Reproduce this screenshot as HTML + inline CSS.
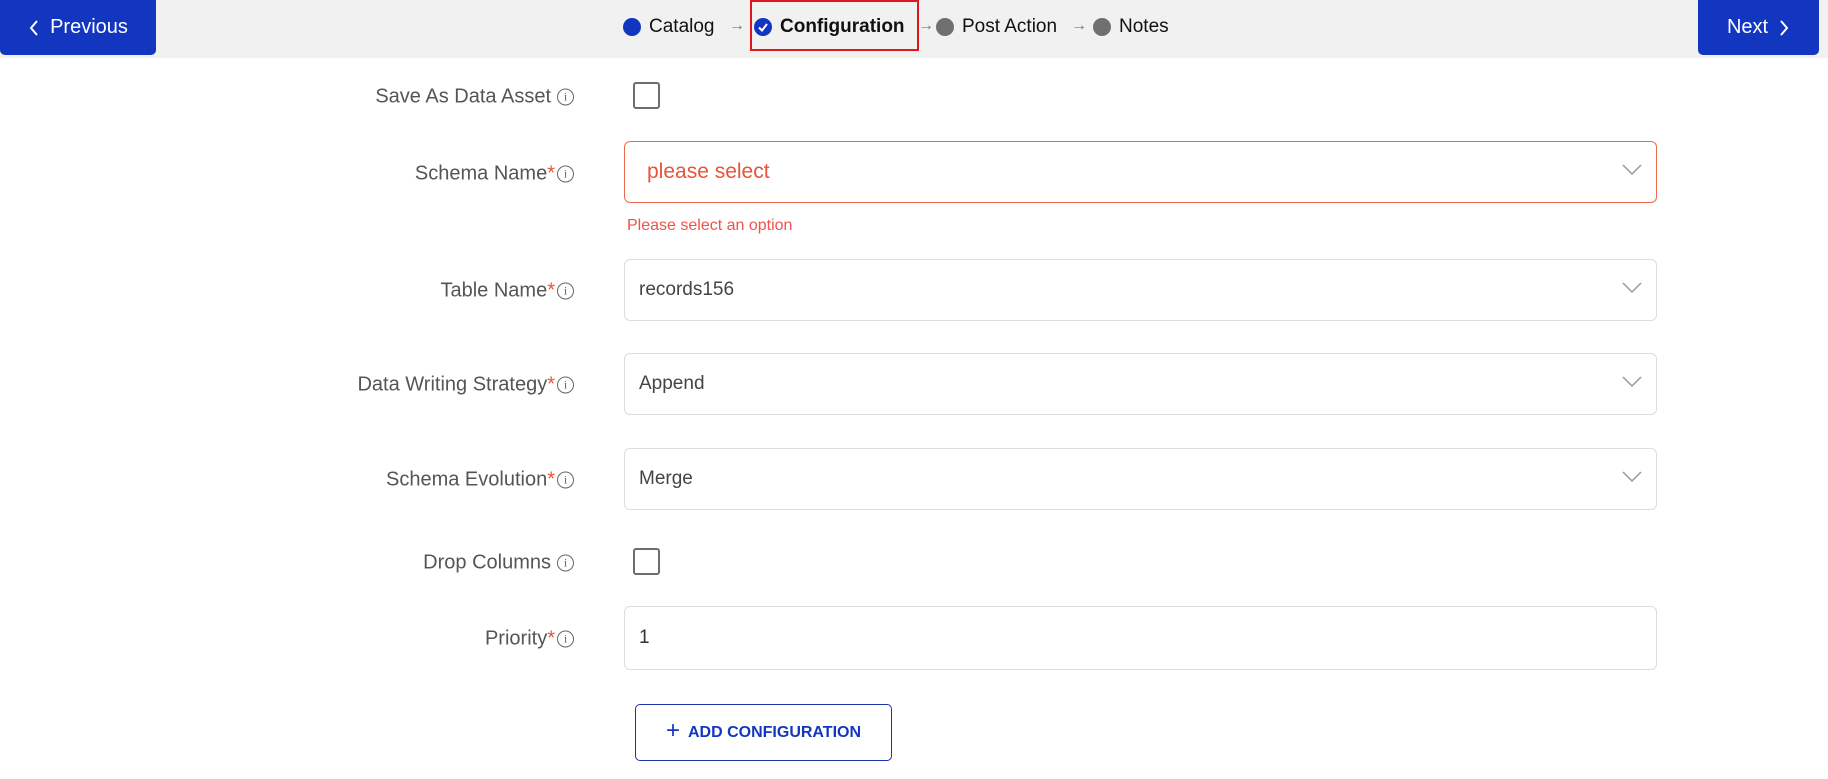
<!DOCTYPE html>
<html><head><meta charset="utf-8"><style>
body{margin:0;width:1828px;height:779px;background:#fff;font-family:"Liberation Sans",sans-serif;position:relative;overflow:hidden}
.hdr{position:absolute;left:0;top:0;width:1828px;height:58px;background:#f1f1f1}
.btn{position:absolute;top:0;height:55px;background:#1336c0;color:#fff;font-size:20px;border-radius:0 0 5px 5px;display:flex;align-items:center;justify-content:center;gap:10px}
.step{position:absolute;top:16px;font-size:19px;color:#111;display:flex;align-items:center}
.dot{width:18px;height:18px;border-radius:50%;display:inline-block;margin-right:8px}
.arr{color:#777;font-size:16px;position:absolute;top:17px}
.lbl{position:absolute;right:1277px;font-size:20px;color:#555;white-space:nowrap;transform:translateY(-50%)}
.lbl.r{right:1273px}
.lbl .s{color:#e8533a}
.info{position:absolute;left:557px;width:17px;height:17px;border:1.5px solid #666;border-radius:50%;transform:translateY(-50%);font-size:12px;color:#666;text-align:center;font-family:"Liberation Serif",serif;box-sizing:border-box;line-height:14px}
.sel{position:absolute;left:624px;width:1033px;height:62px;border:1px solid #ddd;border-radius:6px;box-sizing:border-box;font-size:19px;color:#444;padding-left:14px;display:flex;align-items:center}
.chev{position:absolute;right:14px;top:22px}
.cb{position:absolute;left:633px;width:27px;height:27px;border:2.5px solid #6d6d6d;border-radius:3px;box-sizing:border-box}
</style></head><body>
<div class="hdr"></div>
<div class="btn" style="left:0;width:156px"><svg width="12" height="18"><path d="M9 2 L3 9 L9 16" stroke="#fff" stroke-width="2" fill="none"/></svg>Previous</div>
<div class="btn" style="left:1698px;width:121px">Next<svg width="12" height="18"><path d="M3 2 L9 9 L3 16" stroke="#fff" stroke-width="2" fill="none"/></svg></div>
<div class="step" style="left:623px"><span class="dot" style="background:#1336c0"></span>Catalog</div>
<span class="arr" style="left:729px">→</span>
<div style="position:absolute;left:750px;top:0;width:169px;height:51px;border:2px solid #e0161e;box-sizing:border-box"></div>
<div class="step" style="left:754px"><span class="dot" style="background:#1336c0;position:relative"><svg width="18" height="18" style="position:absolute;left:0;top:0"><path d="M5 9.5 L8 12.5 L13 6" stroke="#fff" stroke-width="2" fill="none"/></svg></span><b style="font-weight:600">Configuration</b></div>
<span class="arr" style="left:918px">→</span>
<div class="step" style="left:936px"><span class="dot" style="background:#707070"></span>Post Action</div>
<span class="arr" style="left:1071px">→</span>
<div class="step" style="left:1093px"><span class="dot" style="background:#707070"></span>Notes</div>

<div class="lbl" style="top:97px">Save As Data Asset</div><div class="info" style="top:97px">i</div>
<div class="cb" style="top:82px"></div>

<div class="lbl r" style="top:174px">Schema Name<span class="s">*</span></div><div class="info" style="top:174px">i</div>
<div class="sel" style="top:141px;border-color:#ef6a4e;color:#e8533a;padding-left:22px;font-size:21px">please select<svg class="chev" width="20" height="12"><path d="M1 1 L10 10 L19 1" stroke="#999" stroke-width="1.5" fill="none"/></svg></div>
<div style="position:absolute;left:627px;top:217px;font-size:16px;color:#f0524a">Please select an option</div>

<div class="lbl r" style="top:291px">Table Name<span class="s">*</span></div><div class="info" style="top:291px">i</div>
<div class="sel" style="top:259px">records156<svg class="chev" width="20" height="12"><path d="M1 1 L10 10 L19 1" stroke="#999" stroke-width="1.5" fill="none"/></svg></div>

<div class="lbl r" style="top:385px">Data Writing Strategy<span class="s">*</span></div><div class="info" style="top:385px">i</div>
<div class="sel" style="top:353px">Append<svg class="chev" width="20" height="12"><path d="M1 1 L10 10 L19 1" stroke="#999" stroke-width="1.5" fill="none"/></svg></div>

<div class="lbl r" style="top:480px">Schema Evolution<span class="s">*</span></div><div class="info" style="top:480px">i</div>
<div class="sel" style="top:448px">Merge<svg class="chev" width="20" height="12"><path d="M1 1 L10 10 L19 1" stroke="#999" stroke-width="1.5" fill="none"/></svg></div>

<div class="lbl" style="top:563px">Drop Columns</div><div class="info" style="top:563px">i</div>
<div class="cb" style="top:548px"></div>

<div class="lbl r" style="top:639px">Priority<span class="s">*</span></div><div class="info" style="top:639px">i</div>
<div class="sel" style="top:606px;height:64px;color:#333">1</div>

<div style="position:absolute;left:635px;top:704px;width:257px;height:57px;border:1.5px solid #1a35a8;border-radius:5px;box-sizing:border-box;display:flex;align-items:center;justify-content:center;color:#1336c0;font-size:16px;font-weight:600;gap:8px"><span style="font-size:24px;font-weight:300;margin-top:-3px">+</span>ADD CONFIGURATION</div>
</body></html>
